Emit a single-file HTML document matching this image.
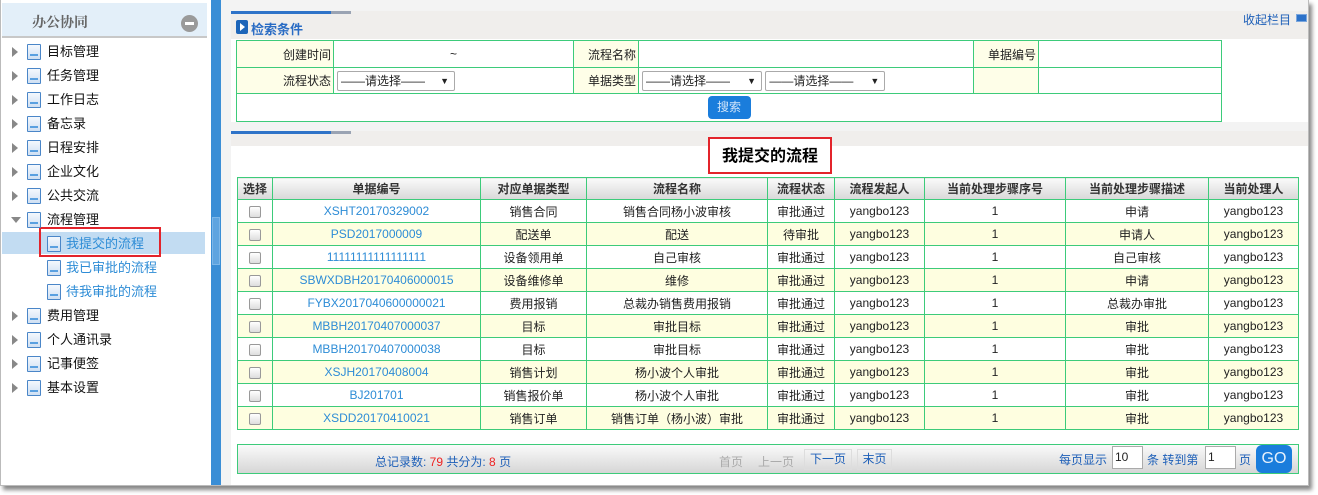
<!DOCTYPE html>
<html><head><meta charset="utf-8"><style>
*{box-sizing:border-box;margin:0;padding:0}
body{width:1318px;height:495px;background:#fff;font-family:"Liberation Sans","Noto Sans CJK SC",sans-serif;font-size:12px;color:#222;position:relative;overflow:hidden}
.abs{position:absolute}
#frame{left:0;top:0;width:1309px;height:486px;border:1px solid #bbb;border-top:0;box-shadow:3px 4px 4px #888;background:#fff}
#side{left:1px;top:0;width:210px;height:485px;background:#fff}
.sh{left:1px;top:3px;width:205px;height:35px;background:#e3eff9;border-bottom:2px solid #c8c8c8}
.sh b{position:absolute;left:30px;top:9px;font-size:14px;color:#666;font-family:"Liberation Serif","Noto Serif CJK SC",serif}
.minus{left:179px;top:12px;width:17px;height:17px;border-radius:50%;background:#9a9a9a}
.minus:after{content:"";position:absolute;left:4px;top:7px;width:9px;height:3px;background:#fff}
.it{position:absolute;height:22px;width:190px;font-size:13px;color:#111;line-height:22px;white-space:nowrap}
.it .tri{position:absolute;left:0;top:6px;width:0;height:0;border-left:6px solid #888;border-top:5px solid transparent;border-bottom:5px solid transparent}
.it .tri.d{top:8px;left:-1px;border-top:6px solid #888;border-left:5px solid transparent;border-right:5px solid transparent;border-bottom:0}
.doc{position:absolute;top:3px;width:14px;height:16px;border:1px solid #4a86c8;background:linear-gradient(#f4f8fd,#cfe0f3);border-radius:1px}
.doc:after{content:"";position:absolute;left:2px;bottom:3px;width:8px;height:2px;background:#5aa0e0}
.it span{position:absolute;white-space:nowrap}
#split{left:211px;top:0;width:10px;height:485px;background:#3a8ed6}
#split i{position:absolute;left:1px;top:217px;width:8px;height:48px;background:#5ea4e0;border:1px solid #7cb6e8}
#cont{left:221px;top:0;width:1087px;height:485px;background:#f3f3f3}
.panel{background:#fff}
.bar{height:3px;width:120px;background:linear-gradient(90deg,#2f73c8 100px,#9aa3b3 100px)}
.t td{border:1px solid #3dcb7a}
table{border-collapse:collapse}
#grid td,#grid th{border:1px solid #3dcb7a;text-align:center;height:23px;font-size:12px;font-weight:normal;white-space:nowrap}
#grid th{background:linear-gradient(#fafafa,#d8d8d8);font-weight:bold;color:#333;height:22px}
#grid tr:nth-child(odd) td{background:#fefee0}
#grid td.l{color:#2d8cd6}
.cb{display:inline-block;width:12px;height:12px;border:1px solid #999;border-radius:2px;background:linear-gradient(#fff,#ddd);vertical-align:middle}
.sel{display:inline-block;height:20px;border:1px solid #aaa;border-radius:2px;font-size:12px;line-height:18px;padding-left:3px;position:relative;background:#fff;vertical-align:middle}
.sel:after{content:"▼";position:absolute;right:5px;top:0;font-size:9px}
</style></head><body>
<div id="frame" class="abs"></div>
<div id="side" class="abs">
<div class="sh abs"><b>办公协同</b><div class="minus abs"></div></div>
<div class="abs" style="left:1px;top:232px;width:203px;height:22px;background:#c2dcf2"></div>
<div class="abs" style="left:38px;top:227px;width:122px;height:30px;border:2px solid #e3242b"></div>
</div>
<div id="split" class="abs"><i></i></div>
<div id="cont" class="abs">
 <div class="abs panel" style="left:10px;top:11px;width:1077px;height:110px;background:#f0eeec"></div>
 <div class="abs bar" style="left:10px;top:11px"></div>
 <div class="abs" style="left:15px;top:20px;width:12px;height:14px;background:#1d65b9;border-radius:2px"></div>
 <div class="abs" style="left:19px;top:23px;width:0;height:0;border-left:5px solid #fff;border-top:4px solid transparent;border-bottom:4px solid transparent"></div>
 <div class="abs" style="left:30px;top:19px;font-size:13px;font-weight:bold;color:#2a6cc4">检索条件</div>
 <div class="abs" style="left:1022px;top:11px;font-size:12px;color:#1d5fb8">收起栏目</div>
 <div class="abs" style="left:1075px;top:14px;width:11px;height:8px;background:#2d72c9;border:1px solid #7aa6dd"></div>
 <div class="abs panel" style="left:10px;top:39px;width:1077px;height:83px"></div>
 <table class="abs t" style="left:15px;top:40px;width:986px;font-size:12px">
  <tr style="height:27px"><td style="width:97px;text-align:right;background:#fefee8;padding-right:2px">创建时间</td><td style="width:240px;text-align:center">~</td><td style="width:65px;text-align:right;background:#fefee8;padding-right:2px">流程名称</td><td style="width:335px"></td><td style="width:65px;text-align:right;background:#fefee8;padding-right:2px">单据编号</td><td></td></tr>
  <tr style="height:26px"><td style="text-align:right;background:#fefee8;padding-right:2px">流程状态</td><td style="padding-left:3px"><span class="sel" style="width:118px">——请选择——</span></td><td style="text-align:right;background:#fefee8;padding-right:2px">单据类型</td><td style="padding-left:3px"><span class="sel" style="width:120px">——请选择——</span> <span class="sel" style="width:120px">——请选择——</span></td><td style="background:#fefee8"></td><td></td></tr>
  <tr style="height:28px"><td colspan="6" style="text-align:center"><span style="display:inline-block;width:43px;height:23px;border-radius:4px;background:#1a7ddc;color:#cfe4fa;line-height:23px">搜索</span></td></tr>
 </table>
 <div class="abs panel" style="left:10px;top:131px;width:1077px;height:354px;background:#fff"></div>
 <div class="abs" style="left:10px;top:131px;width:1077px;height:15px;background:#f0eeec"></div>
 <div class="abs bar" style="left:10px;top:131px"></div>
 <div class="abs" style="left:487px;top:137px;width:124px;height:37px;border:2px solid #e3242b;background:#fff;font-size:16px;font-weight:bold;text-align:center;line-height:35px;color:#000">我提交的流程</div>
 <table id="grid" class="abs" style="left:16px;top:177px;width:1062px">
  <tr><th style="width:35px">选择</th><th style="width:208px">单据编号</th><th style="width:106px">对应单据类型</th><th style="width:181px">流程名称</th><th style="width:67px">流程状态</th><th style="width:90px">流程发起人</th><th style="width:141px">当前处理步骤序号</th><th style="width:143px">当前处理步骤描述</th><th>当前处理人</th></tr>
  <tr><td><span class="cb"></span></td><td class="l">XSHT20170329002</td><td>销售合同</td><td>销售合同杨小波审核</td><td>审批通过</td><td>yangbo123</td><td>1</td><td>申请</td><td>yangbo123</td></tr>
  <tr><td><span class="cb"></span></td><td class="l">PSD2017000009</td><td>配送单</td><td>配送</td><td>待审批</td><td>yangbo123</td><td>1</td><td>申请人</td><td>yangbo123</td></tr>
  <tr><td><span class="cb"></span></td><td class="l">11111111111111111</td><td>设备领用单</td><td>自己审核</td><td>审批通过</td><td>yangbo123</td><td>1</td><td>自己审核</td><td>yangbo123</td></tr>
  <tr><td><span class="cb"></span></td><td class="l">SBWXDBH20170406000015</td><td>设备维修单</td><td>维修</td><td>审批通过</td><td>yangbo123</td><td>1</td><td>申请</td><td>yangbo123</td></tr>
  <tr><td><span class="cb"></span></td><td class="l">FYBX2017040600000021</td><td>费用报销</td><td>总裁办销售费用报销</td><td>审批通过</td><td>yangbo123</td><td>1</td><td>总裁办审批</td><td>yangbo123</td></tr>
  <tr><td><span class="cb"></span></td><td class="l">MBBH20170407000037</td><td>目标</td><td>审批目标</td><td>审批通过</td><td>yangbo123</td><td>1</td><td>审批</td><td>yangbo123</td></tr>
  <tr><td><span class="cb"></span></td><td class="l">MBBH20170407000038</td><td>目标</td><td>审批目标</td><td>审批通过</td><td>yangbo123</td><td>1</td><td>审批</td><td>yangbo123</td></tr>
  <tr><td><span class="cb"></span></td><td class="l">XSJH20170408004</td><td>销售计划</td><td>杨小波个人审批</td><td>审批通过</td><td>yangbo123</td><td>1</td><td>审批</td><td>yangbo123</td></tr>
  <tr><td><span class="cb"></span></td><td class="l">BJ201701</td><td>销售报价单</td><td>杨小波个人审批</td><td>审批通过</td><td>yangbo123</td><td>1</td><td>审批</td><td>yangbo123</td></tr>
  <tr><td><span class="cb"></span></td><td class="l">XSDD20170410021</td><td>销售订单</td><td>销售订单（杨小波）审批</td><td>审批通过</td><td>yangbo123</td><td>1</td><td>审批</td><td>yangbo123</td></tr>
 </table>
 <div class="abs" style="left:16px;top:444px;width:1062px;height:30px;border:1px solid #3dcb7a;background:linear-gradient(#fafafa,#d6d6d6)"></div>
 <div class="abs" style="left:154px;top:453px;color:#1d5fb8">总记录数: <span style="color:#e22">79</span> 共分为: <span style="color:#e22">8</span> 页</div>
 <div class="abs" style="left:498px;top:453px;color:#aaa">首页</div>
 <div class="abs" style="left:537px;top:453px;color:#aaa">上一页</div>
 <div class="abs" style="left:583px;top:449px;width:48px;height:21px;border:1px solid #ddd;color:#1d5fb8;text-align:center;line-height:19px">下一页</div>
 <div class="abs" style="left:636px;top:449px;width:35px;height:21px;border:1px solid #ddd;color:#1d5fb8;text-align:center;line-height:19px">末页</div>
 <div class="abs" style="left:838px;top:451px;color:#1d5fb8">每页显示</div>
 <div class="abs" style="left:891px;top:446px;width:31px;height:23px;border:1px solid #aaa;background:#fff;padding:3px 2px">10</div>
 <div class="abs" style="left:926px;top:451px;color:#1d5fb8">条 转到第</div>
 <div class="abs" style="left:984px;top:446px;width:31px;height:23px;border:1px solid #aaa;background:#fff;padding:3px 2px">1</div>
 <div class="abs" style="left:1018px;top:451px;color:#1d5fb8">页</div>
 <div class="abs" style="left:1035px;top:445px;width:36px;height:28px;border-radius:6px;background:#1a7ddc;color:#e6f1fc;font-size:16px;text-align:center;line-height:28px">GO</div>
</div>
<div class="it" style="left:12px;top:41px"><i class="tri"></i><i class="doc" style="left:15px"></i><span style="left:35px">目标管理</span></div>
<div class="it" style="left:12px;top:65px"><i class="tri"></i><i class="doc" style="left:15px"></i><span style="left:35px">任务管理</span></div>
<div class="it" style="left:12px;top:89px"><i class="tri"></i><i class="doc" style="left:15px"></i><span style="left:35px">工作日志</span></div>
<div class="it" style="left:12px;top:113px"><i class="tri"></i><i class="doc" style="left:15px"></i><span style="left:35px">备忘录</span></div>
<div class="it" style="left:12px;top:137px"><i class="tri"></i><i class="doc" style="left:15px"></i><span style="left:35px">日程安排</span></div>
<div class="it" style="left:12px;top:161px"><i class="tri"></i><i class="doc" style="left:15px"></i><span style="left:35px">企业文化</span></div>
<div class="it" style="left:12px;top:185px"><i class="tri"></i><i class="doc" style="left:15px"></i><span style="left:35px">公共交流</span></div>
<div class="it" style="left:12px;top:209px"><i class="tri d"></i><i class="doc" style="left:15px"></i><span style="left:35px">流程管理</span></div>
<div class="it" style="left:12px;top:233px;color:#2d8cd6"><i class="doc" style="left:35px"></i><span style="left:54px">我提交的流程</span></div>
<div class="it" style="left:12px;top:257px;color:#2d8cd6"><i class="doc" style="left:35px"></i><span style="left:54px">我已审批的流程</span></div>
<div class="it" style="left:12px;top:281px;color:#2d8cd6"><i class="doc" style="left:35px"></i><span style="left:54px">待我审批的流程</span></div>
<div class="it" style="left:12px;top:305px"><i class="tri"></i><i class="doc" style="left:15px"></i><span style="left:35px">费用管理</span></div>
<div class="it" style="left:12px;top:329px"><i class="tri"></i><i class="doc" style="left:15px"></i><span style="left:35px">个人通讯录</span></div>
<div class="it" style="left:12px;top:353px"><i class="tri"></i><i class="doc" style="left:15px"></i><span style="left:35px">记事便签</span></div>
<div class="it" style="left:12px;top:377px"><i class="tri"></i><i class="doc" style="left:15px"></i><span style="left:35px">基本设置</span></div>
</body></html>
